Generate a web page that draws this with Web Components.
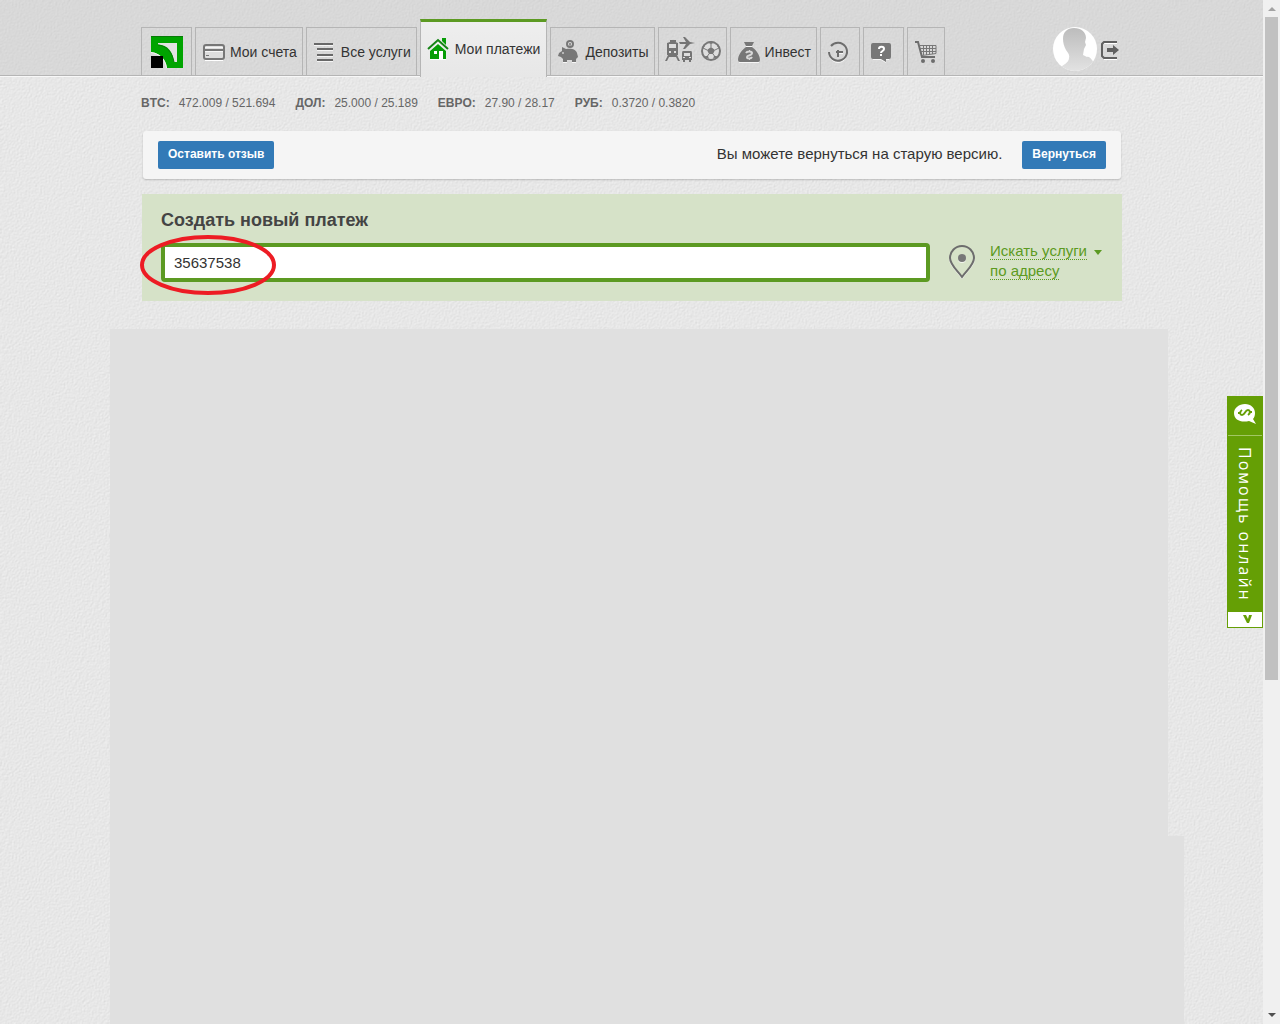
<!DOCTYPE html>
<html lang="ru">
<head>
<meta charset="utf-8">
<title>Мои платежи</title>
<style>
    html, body {
        height: 100%;
        margin: 0;
    }
    body {
        font-family: "Liberation Sans", Arial, sans-serif;
        font-size: 15px;
        color: #333;
        overflow: hidden;
    }
</style>
</head>
<body>
<bank-page>
    <bank-header slot="header">
        <nav-tab icon="logo" label="Приват24"></nav-tab>
        <nav-tab icon="card">Мои счета</nav-tab>
        <nav-tab icon="list">Все услуги</nav-tab>
        <nav-tab icon="house" active>Мои платежи</nav-tab>
        <nav-tab icon="pig">Депозиты</nav-tab>
        <nav-tab icon="travel" label="Билеты"></nav-tab>
        <nav-tab icon="bag">Инвест</nav-tab>
        <nav-tab icon="clock" label="История"></nav-tab>
        <nav-tab icon="help" label="Помощь"></nav-tab>
        <nav-tab icon="cart" label="Корзина"></nav-tab>
    </bank-header>
    <rate-ticker></rate-ticker>
    <notice-bar>Вы можете вернуться на старую версию.</notice-bar>
    <payment-form value="35637538">Создать новый платеж</payment-form>
    <help-tab slot="help">Помощь онлайн</help-tab>
</bank-page>

<script>
const icons = {
    logo: `<svg width="32" height="32" viewBox="0 0 32 32">
        <path fill="#00a400" d="M0 0h32v32H16C15 23 9 17 0 16z"/>
        <path fill="none" stroke="#087b08" d="M0 .5h32"/>
        <path fill="#e2e2e2" d="M7 7h19v19h-3C22 16 17 9 7 8.500z"/>
        <path fill="none" stroke="#087b08" d="M7 9c9 1 14 7 16 17"/>
        <path fill="none" stroke="#f6f6f6" d="M0 16.500c8 1 14 6 15.500 15.500"/>
        <path d="M0 20h12v12H0z"/></svg>`,
    card: `<svg width="22" height="22" viewBox="0 0 22 22">
        <path stroke="#fff" d="M2 19.500h18"/>
        <rect x="1" y="4" width="20" height="14" rx="2" fill="#dedede" stroke="#777" stroke-width="2"/>
        <path stroke="#777" stroke-width="2" d="M1 9h20"/><path stroke="#f6f6f6" d="M2 6.500h18M2 10.500h18"/>
        <path stroke="#777" d="M3 14.500h3"/></svg>`,
    list: `<svg width="22" height="22" viewBox="0 0 22 22">
        <path stroke="#f5f5f5" d="M0 4.500h19M3 9.500h16M3 15.500h16M3 20.500h16"/>
        <path stroke="#686868" stroke-width="2" d="M0 3h19M3 8h16M3 14h16M3 19h16"/></svg>`,
    house: `<svg width="22" height="24" viewBox="0 0 22 24">
        <path fill="#fff" d="M3 14 11 6l8 8v9H3z"/>
        <path fill="#079d07" d="M15 1h4v7l-4-4zM3 14l8-7 8 7v8H3z"/>
        <path fill="none" stroke="#158415" stroke-width="2" d="M1 12 11 3l10 9"/>
        <path fill="#fff" d="M7 14h3v3H7zM12 14h4v8h-4z"/></svg>`,
    pig: `<svg width="22" height="24" viewBox="0 0 22 24">
        <path fill="#f6f6f6" d="M5 21h4v2H5zM14 21h4v2h-4z"/>
        <path fill="#777" d="M1 13l3-2v-4l4 2c5-1 10 0 11 4l1 4-2 2v3h-4v-2H9v2H5v-3l-2-2-3-1z"/>
        <circle cx="12" cy="4" r="3" fill="#ddd" stroke="#777" stroke-width="2"/>
        <path stroke="#777" d="M12 3v3M11 4h2"/><circle cx="5" cy="13" r="1" fill="#ccc"/></svg>`,
    travel: `<svg width="56" height="28" viewBox="0 0 56 28">
        <g fill="#747474">
            <path d="M2 7q6-3 11 0v12H2zM5 4h6v2H5z"/><path fill="#ddd" d="M4 8h7v4H4zM4 15h2v2H4zM9 15h2v2H9z"/>
            <path d="m3 19-3 6h2l2-4h7l2 4h2l-3-6z"/>
            <path d="M15 6h6l-3-5h2l5 5 5 1-5 1-5 5h-2l3-5h-6l-1-2z"/>
            <path d="M18 15h8q1 0 1 2v7H17v-7q0-2 1-2zM18 24h2v2h-2zM24 24h2v2h-2z"/>
            <path fill="#ddd" d="M19 17h6v3h-6zM18 21h2v1h-2zM24 21h2v1h-2z"/>
        </g>
        <circle cx="46" cy="15" r="9" fill="#dedede" stroke="#777" stroke-width="2"/>
        <path fill="#777" d="m46 11 4 3-2 4h-4l-2-4zM42 6l4 2 4-2-4-1zM37 13l3-3-1-2zM55 13l-3-3 1-2zM39 20h4l1 3zM53 20h-4l-1 3z"/>
        <path fill="none" stroke="#777" d="M46 7v4M42 14l-4-2M50 14l4-2M44 18l-3 4M48 18l3 4"/></svg>`,
    bag: `<svg width="22" height="24" viewBox="0 0 22 24">
        <path fill="#777" d="M6 2h10l-2 4H8zM8 7h6c4 3 8 8 8 13q0 2-2 2H2q-2 0-2-2c0-5 4-10 8-13z"/>
        <path fill="none" stroke="#d8d8d8" stroke-width="2" d="M8 13c1-2 6-2 6 0 0 3-5 2-5 4s4 2 5 0"/>
        <path stroke="#d8d8d8" d="M11.500 10v2M11.500 18v2"/>
        <path stroke="#f6f6f6" d="M1 22.500h20M8 6.500h6"/></svg>`,
    clock: `<svg width="24" height="24" viewBox="0 0 24 24">
        <path fill="none" stroke="#f6f6f6" d="M2 18c4 6 12 6 16 0M11 13.500h4"/>
        <path fill="none" stroke="#6d6d6d" stroke-width="2" d="M3 6a9 9 0 1 1-2 6M10 10v7M8 12h7"/></svg>`,
    help: `<svg width="25" height="24" viewBox="0 0 25 24">
        <path fill="#f6f6f6" d="M2 18h16v2h-3v3l-5-3H2z"/>
        <path fill="#777" d="M2 3h16q2 0 2 2v12q0 2-2 2h-3v3l-5-3H2q-2 0-2-2V5q0-2 2-2z"/>
        <path fill="none" stroke="#fff" stroke-width="2" d="M8 9c0-3 5-3 5 0 0 2-3 2-3 4M10 14v2"/></svg>`,
    cart: `<svg width="22" height="24" viewBox="0 0 22 24">
        <path fill="none" stroke="#6d6d6d" stroke-width="2" d="M0 2h3l4 15h13"/>
        <path fill="none" stroke="#777" d="M4 5.500h17v8L7 15.500M5 8.500h16M6 11.500h15M8.500 5v10M11.500 5v10M14.500 5v9M17.500 5v9"/>
        <circle cx="8" cy="21" r="2" fill="#6d6d6d"/><circle cx="18" cy="21" r="2" fill="#6d6d6d"/></svg>`
};

const rates = [
    ["BTC:", "472.009 / 521.694"],
    ["ДОЛ:", "25.000 / 25.189"],
    ["ЕВРО:", "27.90 / 28.17"],
    ["РУБ:", "0.3720 / 0.3820"]
];

class BankPage extends HTMLElement {
    constructor() {
        super();
        this.attachShadow({ mode: "open" });
    }

    connectedCallback() {
        this.shadowRoot.innerHTML = `
        <style>
        :host {
          display: flex;
          height: 100%;
        }
        .Page {
          position: relative;
          flex: 1;
          min-width: 0;
          display: flex;
          flex-direction: column;
          background: #e6e6e6;
          isolation: isolate;
        }
        .Page__paper {
          position: absolute;
          inset: 0;
          width: 100%;
          height: 100%;
          z-index: -1;
        }
        .Page__content {
          box-sizing: border-box;
          width: 100%;
          max-width: 981px;
          margin: 0 auto;
        }
        .Page__blank {
          display: flex;
          flex-direction: column;
          flex: 1;
          margin-top: 28px;
          padding-left: 110px;
        }
        .Page__block {
          height: 507px;
          margin-right: 95px;
          background: #e0e0e0;
        }
        .Page__block--last {
          height: auto;
          flex: 1;
          margin-right: 79px;
        }
        .Page__help {
          position: absolute;
          right: 0;
          top: 396px;
        }
        </style>
        <div class="Page">
          <svg class="Page__paper" aria-hidden="true">
            <filter id="paper" x="0" y="0" width="100%" height="100%" color-interpolation-filters="sRGB">
              <feTurbulence type="fractalNoise" baseFrequency="0.6" numOctaves="3" seed="4"/>
              <feDiffuseLighting surfaceScale="0.2" lighting-color="#fff">
                <feDistantLight azimuth="225" elevation="65"/>
              </feDiffuseLighting>
            </filter>
            <rect width="100%" height="100%" filter="url(#paper)"/>
          </svg>
          <slot name="header"></slot>
          <main class="Page__content"><slot></slot></main>
          <div class="Page__blank">
            <div class="Page__block"></div>
            <div class="Page__block Page__block--last"></div>
          </div>
          <div class="Page__help"><slot name="help"></slot></div>
        </div>
        <scroll-rail></scroll-rail>
        `;
    }
}

class BankHeader extends HTMLElement {
    constructor() {
        super();
        this.attachShadow({ mode: "open" });
    }

    connectedCallback() {
        this.shadowRoot.innerHTML = `
        <style>
        :host {
          display: block;
          background: rgba(190, 190, 190, .35);
          border-bottom: 1px solid #b5b5b5;
          box-shadow: 0 1px #f8f8f8;
        }
        .Header {
          display: flex;
          align-items: flex-end;
          justify-content: space-between;
          max-width: 981px;
          margin: 0 auto;
          padding-top: 19px;
        }
        nav {
          display: flex;
          align-items: flex-end;
          gap: 3px;
        }
        .User {
          display: flex;
          align-items: center;
          gap: 3px;
          padding: 0 2px 3px 0;
        }
        button {
          padding: 0;
          border: none;
          background: none;
        }
        svg {
          display: block;
        }
        </style>
        <header class="Header">
          <nav><slot></slot></nav>
          <div class="User">
            <svg width="45" height="45" viewBox="0 0 45 45" role="img" aria-label="Профиль">
              <defs>
                <linearGradient id="skin" x2="0" y2="1"><stop stop-color="#bcbcbc"/><stop offset="1" stop-color="#e6e6e6"/></linearGradient>
                <clipPath id="round"><circle cx="22" cy="22" r="22"/></clipPath>
              </defs>
              <circle cx="22" cy="22" r="22" fill="#fff"/>
              <path clip-path="url(#round)" fill="url(#skin)" d="M10 12C10 5 14 1 21 1s12 4 12 10l-1 4 1 3-2 4-1 6 4 2c3-1 5 3 8 8v10H7v-8c6-3 9-6 9-9 1-3-1-5-3-8-2-4-3-7-3-11z"/>
            </svg>
            <button aria-label="Выход">
              <svg width="19" height="20" viewBox="0 0 19 20">
                <path fill="none" stroke="#fff" d="M3 19.500h13M3 3.500h13"/>
                <path fill="none" stroke="#606060" stroke-width="2" d="M16 2H3L1 4v12l2 2h13"/>
                <path fill="#606060" d="M6 8h6V5l6 5-6 5v-3H6z"/>
              </svg>
            </button>
          </div>
        </header>
        `;
    }
}

class NavTab extends HTMLElement {
    constructor() {
        super();
        this.attachShadow({ mode: "open" });
    }

    connectedCallback() {
        const label = this.getAttribute("label");
        this.shadowRoot.innerHTML = `
        <style>
        :host {
          display: block;
          font-size: 14px;
        }
        a {
          box-sizing: border-box;
          display: flex;
          align-items: center;
          gap: 5px;
          height: 48px;
          padding: 0 5px 0 7px;
          border: 1px solid #b5b5b5;
          border-bottom: none;
          color: #333;
          text-decoration: none;
          white-space: nowrap;
        }
        a[aria-label] {
          padding: 0 7px;
          gap: 0;
        }
        :host([icon="logo"]) a {
          padding: 0 8px 0 9px;
        }
        :host([icon="travel"]) a {
          padding: 0 5px 4px 6px;
        }
        :host([active]) {
          position: relative;
          margin-bottom: -2px;
        }
        :host([active]) a {
          gap: 6px;
          height: 58px;
          padding: 0 6px 2px;
          border-top: 3px solid #5c9a22;
          background: linear-gradient(#eee, #e7e7e7);
        }
        svg {
          flex: none;
        }
        </style>
        <a href="#" ${label ? `aria-label="${label}"` : ""}>${icons[this.getAttribute("icon")]}<slot></slot></a>
        `;
    }
}

class RateTicker extends HTMLElement {
    constructor() {
        super();
        this.attachShadow({ mode: "open" });
    }

    connectedCallback() {
        this.shadowRoot.innerHTML = `
        <style>
        :host {
          display: block;
          padding: 19px 0 20px;
          font-size: 12px;
          line-height: 16px;
          color: #666;
        }
        dl, div {
          display: flex;
          margin: 0;
        }
        dl {
          gap: 20px;
        }
        div {
          gap: 9px;
        }
        dt {
          font-weight: bold;
        }
        dd {
          margin: 0;
        }
        </style>
        <dl>${rates.map(([name, value]) => `<div><dt>${name}</dt><dd>${value}</dd></div>`).join("")}</dl>
        `;
    }
}

class NoticeBar extends HTMLElement {
    constructor() {
        super();
        this.attachShadow({ mode: "open" });
    }

    connectedCallback() {
        this.shadowRoot.innerHTML = `
        <style>
        :host {
          display: flex;
          align-items: center;
          margin: 0 1px 15px 2px;
          padding: 10px 15px;
          background: #f5f5f5;
          border-radius: 3px;
          box-shadow: 0 1px 2px rgba(0, 0, 0, .2);
        }
        p {
          flex: 1;
          margin: 0 20px 0 0;
          line-height: 26px;
          padding-bottom: 2px;
          text-align: right;
        }
        button {
          height: 28px;
          padding: 0 10px 2px;
          border: none;
          border-radius: 2px;
          background: #337ab7;
          color: #fff;
          font: bold 12px "Liberation Sans", Arial, sans-serif;
        }
        </style>
        <button>Оставить отзыв</button>
        <p><slot></slot></p>
        <button>Вернуться</button>
        `;
    }
}

class PaymentForm extends HTMLElement {
    constructor() {
        super();
        this.attachShadow({ mode: "open" });
    }

    connectedCallback() {
        this.shadowRoot.innerHTML = `
        <style>
        :host {
          display: block;
          position: relative;
          margin-left: 1px;
          padding: 14px 20px 19px 19px;
          background: #d6e2c8;
        }
        label {
          display: block;
          margin-bottom: 9px;
          font-size: 18px;
          line-height: 24px;
          font-weight: bold;
          color: #444;
        }
        .Form__row {
          display: flex;
          align-items: center;
        }
        input {
          box-sizing: border-box;
          flex: 1;
          align-self: flex-end;
          min-width: 0;
          height: 39px;
          padding: 0 9px;
          border: 4px solid #5c9a22;
          border-radius: 4px;
          background: #fff;
          color: #333;
          font: 15px "Liberation Sans", Arial, sans-serif;
          outline: none;
        }
        .Form__pin {
          flex: none;
          margin: 0 14px 0 18px;
        }
        a {
          display: flex;
          gap: 7px;
          padding-bottom: 1px;
          color: #5c9a22;
          line-height: 20px;
          text-decoration: none;
        }
        a span {
          border-bottom: 1px dotted #5c9a22;
        }
        a::after {
          content: "";
          align-self: flex-start;
          margin-top: 9px;
          border: 4px solid transparent;
          border-top: 5px solid #5c9a22;
          border-bottom: none;
        }
        .Form__mark {
          position: absolute;
          left: -2px;
          top: 41px;
        }
        </style>
        <label for="query"><slot></slot></label>
        <div class="Form__row">
          <input id="query" type="text" value="${this.getAttribute("value") || ""}">
          <svg class="Form__pin" width="28" height="34" viewBox="0 0 28 34" aria-hidden="true">
            <path fill="none" stroke="#f3f6ef" stroke-width="2" d="M14 33C10 26 2 21 2 14a12 12 0 0 1 24 0c0 7-8 12-12 19z"/>
            <path fill="#d6e2c8" stroke="#6d6d6d" stroke-width="2" d="M14 32C10 26 2 20 2 13a12 12 0 0 1 24 0c0 7-8 13-12 19z"/>
            <circle cx="14" cy="14" r="4" fill="#f3f6ef"/><circle cx="14" cy="13" r="4" fill="#777"/>
          </svg>
          <a href="#"><div><span>Искать услуги</span><br><span>по адресу</span></div></a>
        </div>
        <svg class="Form__mark" width="136" height="60" viewBox="0 0 136 60" aria-hidden="true">
          <ellipse cx="68" cy="30" rx="66" ry="28" fill="none" stroke="#ed1c24" stroke-width="4"/>
        </svg>
        `;
    }
}

class HelpTab extends HTMLElement {
    constructor() {
        super();
        this.attachShadow({ mode: "open" });
    }

    connectedCallback() {
        this.shadowRoot.innerHTML = `
        <style>
        :host {
          display: block;
        }
        button {
          display: flex;
          flex-direction: column;
          align-items: stretch;
          width: 36px;
          padding: 0;
          border: 1px solid #659f05;
          background: #659f05;
          color: #fff;
          font: 500 16px "Open Sans", "Noto Sans", sans-serif;
        }
        .Help__icon {
          display: flex;
          justify-content: center;
          padding: 6px 0 10px;
          border-bottom: 1px solid #a2c763;
        }
        .Help__text {
          box-sizing: border-box;
          min-height: 176px;
          padding: 11px 0 8px;
          line-height: 34px;
          writing-mode: vertical-rl;
          letter-spacing: 2px;
          white-space: nowrap;
          text-align: left;
        }
        .Help__fold {
          display: flex;
          justify-content: center;
          padding: 3px 0 4px 4px;
          background: #fff;
        }
        svg {
          display: block;
        }
        </style>
        <button>
          <span class="Help__icon">
            <svg width="22" height="22" viewBox="0 0 22 22">
              <path fill="#fff" d="M11 1c6 0 10 4 10 9 0 3-1 5-2 6l3 5-7-3C7 20 0 17 0 10 0 5 5 1 11 1z"/>
              <path fill="none" stroke="#659f05" stroke-width="2" d="M4 10h2M16 9h2M8 7c-3 2-2 5 0 5 3 0 3-5 6-5 2 0 3 3 0 5"/>
            </svg>
          </span>
          <span class="Help__text"><slot></slot></span>
          <span class="Help__fold">
            <svg width="9" height="8" viewBox="0 0 9 8"><path fill="#659f05" d="M0 0h3l2 4 1-4h3L6 8H4z"/></svg>
          </span>
        </button>
        `;
    }
}

class ScrollRail extends HTMLElement {
    constructor() {
        super();
        this.attachShadow({ mode: "open" });
    }

    connectedCallback() {
        this.shadowRoot.innerHTML = `
        <style>
        :host {
          box-sizing: border-box;
          display: flex;
          flex-direction: column;
          align-items: center;
          width: 17px;
          padding: 7px 0;
          background: #f0f0f0;
        }
        i {
          border: 4px solid transparent;
        }
        .up {
          border-top: none;
          border-bottom-color: #a3a3a3;
        }
        .down {
          border-bottom: none;
          border-top-color: #505050;
        }
        .track {
          flex: 1;
          margin: 6px 0;
        }
        .thumb {
          width: 13px;
          height: 67%;
          background: #c1c1c1;
        }
        </style>
        <i class="up"></i>
        <div class="track"><div class="thumb"></div></div>
        <i class="down"></i>
        `;
    }
}

customElements.define("scroll-rail", ScrollRail);
customElements.define("bank-page", BankPage);
customElements.define("bank-header", BankHeader);
customElements.define("nav-tab", NavTab);
customElements.define("rate-ticker", RateTicker);
customElements.define("notice-bar", NoticeBar);
customElements.define("payment-form", PaymentForm);
customElements.define("help-tab", HelpTab);
</script>
</body>
</html>
